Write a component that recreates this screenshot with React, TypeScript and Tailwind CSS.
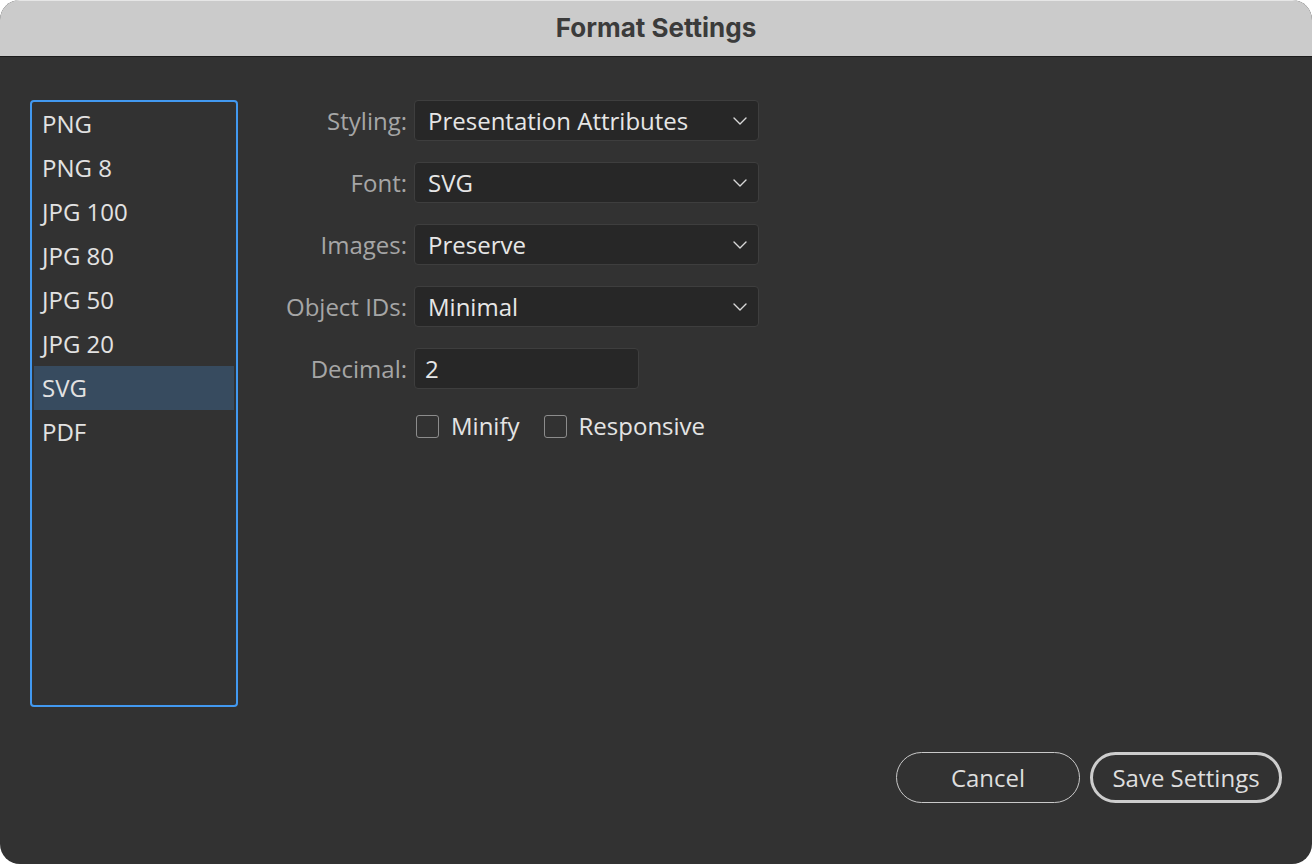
import React from "react";

const formats = ["PNG", "PNG 8", "JPG 100", "JPG 80", "JPG 50", "JPG 20", "SVG", "PDF"];

const selects = [
  { label: "Styling:", value: "Presentation Attributes" },
  { label: "Font:", value: "SVG" },
  { label: "Images:", value: "Preserve" },
  { label: "Object IDs:", value: "Minimal" },
];

function Chevron() {
  return (
    <svg width="14" height="8" viewBox="0 0 14 8" fill="none" className="shrink-0">
      <path d="M1 1l6 6 6-6" stroke="#d8d8d8" strokeWidth="1.4" strokeLinecap="round" strokeLinejoin="round" />
    </svg>
  );
}

function Checkbox({ label }: { label: string }) {
  return (
    <label className="flex items-center gap-3">
      <span className="h-[23px] w-[23px] rounded-[3px] border-[1.5px] border-[#8c8c8c]" />
      <span className="text-[#e4e4e4]">{label}</span>
    </label>
  );
}

export default function App() {
  const selected = "SVG";
  return (
    <div className="h-[864px] w-[1312px] bg-white">
      <div
        className="flex h-full w-full flex-col overflow-hidden rounded-[20px] bg-[#323232] text-[24px] font-medium"
        style={{ fontFamily: '"Open Sans", "Noto Sans", sans-serif' }}
      >
        <header className="flex h-[57px] shrink-0 items-center justify-center border-b border-[#1c1c1c] bg-[#cbcbcb] pb-[2px] shadow-[inset_0_1px_0_#e6e6e6]">
          <h1
            className="text-[26px] font-bold text-[#3b3b3b]"
            style={{ fontFamily: "Inter, sans-serif" }}
          >
            Format Settings
          </h1>
        </header>

        <div className="flex flex-1 flex-col px-[30px] pt-[43px] pb-[61px]">
          <div className="flex gap-[40px]">
            <ul className="flex h-[607px] w-[208px] flex-col rounded-[4px] border-2 border-[#4299f0] px-[2px]">
              {formats.map((f) => (
                <li
                  key={f}
                  className={
                    "flex h-[44px] items-center px-[8px] text-[#e2e2e2] " +
                    (f === selected ? "bg-[#374b5f]" : "")
                  }
                >
                  {f}
                </li>
              ))}
            </ul>

            <div className="flex flex-col">
              <div className="flex flex-col gap-[21px]">
                {selects.map((s) => (
                  <div key={s.label} className="flex items-center gap-[7px]">
                    <span className="w-[129px] text-right whitespace-nowrap text-[#a6a6a6]">{s.label}</span>
                    <div className="flex h-[41px] w-[345px] items-center justify-between rounded-[4px] border border-[#3e3e3e] bg-[#272727] pr-[11px] pl-[13px]">
                      <span className="text-[#e6e6e6]">{s.value}</span>
                      <Chevron />
                    </div>
                  </div>
                ))}
                <div className="flex items-center gap-[7px]">
                  <span className="w-[129px] text-right text-[#a6a6a6]">Decimal:</span>
                  <div className="flex h-[41px] w-[225px] items-center rounded-[4px] border border-[#3e3e3e] bg-[#272727] pl-[10px]">
                    <span className="text-[#e6e6e6]">2</span>
                  </div>
                </div>
              </div>
              <div className="mt-[19px] flex items-center gap-[24px] pl-[138px]">
                <Checkbox label="Minify" />
                <Checkbox label="Responsive" />
              </div>
            </div>
          </div>

          <div className="mt-auto flex justify-end gap-[10px]">
            <button className="h-[51px] w-[184px] rounded-full border-[1.5px] border-[#c9c9c9] text-[#dedede]">
              Cancel
            </button>
            <button className="h-[51px] w-[192px] rounded-full border-[3px] border-[#cdcdcd] text-[#dedede]">
              Save Settings
            </button>
          </div>
        </div>
      </div>
    </div>
  );
}
